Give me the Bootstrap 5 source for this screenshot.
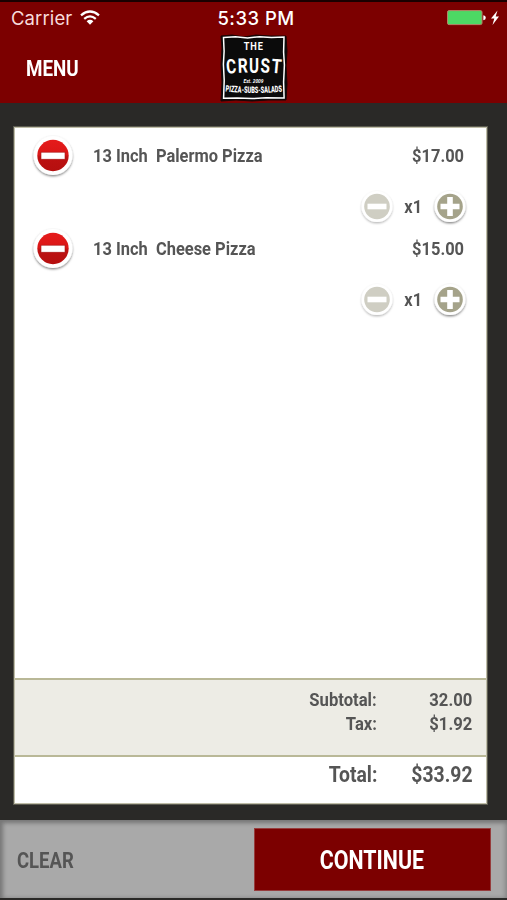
<!DOCTYPE html>
<html lang="en">
<head>
<meta charset="utf-8">
<meta name="viewport" content="width=device-width, initial-scale=1">
<title>The Crust - Order</title>
<link href="https://cdn.jsdelivr.net/npm/bootstrap@5.3.0/dist/css/bootstrap.min.css" rel="stylesheet">
<style>
body{background:#2a2927;font-family:Roboto,"Liberation Sans",sans-serif;color:#555;height:900px;overflow:hidden}
svg{display:block;flex:none}
.top-bar{background:#7c0000;border-top:2px solid #1a0000;height:103px}
.status{font-family:Inter,"Liberation Sans",sans-serif;font-size:18.5px;line-height:32px;height:32px;color:#f8dddd}
.status .clock{color:#fff;font-weight:500;letter-spacing:.45px;padding-left:5px}
.carrier{padding-left:3px;letter-spacing:.1px}
.cond{display:inline-block;font-weight:700;white-space:pre;transform:scaleX(.88);transform-origin:left center}
.cond.end{transform-origin:right center}
.cond.mid{transform-origin:center}
.cond.tight{transform:scaleX(.855)}
.menu-link{font-size:22px;line-height:30px;color:#fff;text-decoration:none;padding-left:26px;padding-top:20px}
.ticket{margin:23px 19px 0 13px;height:679px;background:#fff;border:1px solid #5d5c51;box-shadow:inset 0 0 0 1px #bfbda8;padding:1px}
.line-item{height:93px;font-size:18.7px}
.line-main{height:56px;padding:0 22px 0 15px}
.line-qty{height:46px;padding-right:17px}
.line-name{margin-left:17px}
.qty{padding:0 8px 0 7px}
.icon-btn{border:0;background:none;padding:0}
.sums{background:#edece5;border-top:2px solid #b9b897;border-bottom:2px solid #b9b897;height:79px;padding:8px 14px 0 0;font-size:18.7px;line-height:24px}
.sums .cond{transform:scaleX(.89)}
.grand{height:46px;padding:4px 14px 0 0;font-size:22px;line-height:28px}
.amount{width:95px}
.bottom-bar{margin-top:15px;height:78px;background:#a9a9a9;box-shadow:inset 3px 3px 4px #777,inset -2px 0 4px #888;padding:8px 16px 7px 17px}
.clear-link{font-size:22px;color:#555;text-decoration:none;margin-top:1px}
.clear-link .cond.tight{transform:scaleX(.84)}
.go{width:237px;background:#7c0000;color:#fff;border-radius:0;font-size:25px;padding:2px 2px 0 0;border:1px solid #963c3c}
</style>
<script src="https://cdn.jsdelivr.net/npm/bootstrap@5.3.0/dist/js/bootstrap.bundle.min.js"></script>
</head>
<body class="d-flex flex-column">
<svg width="0" height="0" class="position-absolute">
  <defs>
    <linearGradient id="red" x2="0" y2="1"><stop stop-color="#e51b1b"/><stop offset=".48" stop-color="#da1717"/><stop offset=".54" stop-color="#bd1111"/><stop offset="1" stop-color="#b50f0f"/></linearGradient>
    <filter id="drop" x="-20%" y="-20%" width="140%" height="140%"><feDropShadow dx="0" dy="1.3" stdDeviation="1" flood-color="#000" flood-opacity=".5"/></filter>
    <symbol id="remove" viewBox="0 0 46 46"><circle cx="23" cy="22.5" r="19.5" fill="#fff" filter="url(#drop)"/><circle cx="23" cy="22.5" r="15.7" fill="url(#red)"/><rect x="11" y="19.2" width="24" height="7" fill="#fff" stroke="#a51414" stroke-width=".6"/></symbol>
    <symbol id="minus" viewBox="0 0 38 38"><g opacity=".58"><circle cx="19" cy="18.5" r="15.5" fill="#fff" filter="url(#drop)"/></g><circle cx="19" cy="18.5" r="12.8" fill="#cfcec3"/><rect x="9.5" y="15.7" width="19" height="5.6" fill="#fff"/></symbol>
    <symbol id="plus" viewBox="0 0 38 38"><circle cx="19" cy="18.5" r="15.5" fill="#fff" filter="url(#drop)"/><circle cx="19" cy="18.5" r="12.8" fill="#a5a38a"/><path d="M16.2 9h5.6v6.7h6.7v5.6h-6.7v6.7h-5.6v-6.7H9.5v-5.6h6.7z" fill="#fff"/></symbol>
  </defs>
</svg>
<header class="top-bar flex-shrink-0">
  <div class="row g-0 status">
    <div class="col d-flex align-items-center ps-2"><span class="carrier">Carrier</span>
      <svg class="ms-2" width="20" height="17" viewBox="0 0 20 17" fill="none" stroke="#fff" stroke-width="2.3"><path d="M1 5.3Q10-2.3 19 5.3M4.2 8.8Q10 3.9 15.8 8.8"/><path d="M6.6 11.2Q10 8.5 13.4 11.2L10 14.8z" fill="#fff" stroke="none"/></svg>
    </div>
    <div class="col-auto clock">5:33 PM</div>
    <div class="col d-flex align-items-center justify-content-end pe-2">
      <svg width="53" height="18" viewBox="0 0 53 18"><rect x="1.5" y="1.6" width="34.5" height="14" rx="1.5" fill="#4cd964" stroke="#b58468"/><path d="M37.3 6.3q2.5.4 2.5 2.5t-2.5 2.5z" fill="#fff"/><path d="M51.5 1.5l-6.5 8h3.3l-1.8 6.5 6.500-8.500h-3.300z" fill="#fff"/></svg>
    </div>
  </div>
  <div class="row g-0">
    <div class="col d-flex align-items-start"><a href="#" class="menu-link"><span class="cond tight">MENU</span></a></div>
    <div class="col-auto">
      <svg width="68" height="68" viewBox="0 0 68 68" font-family="Roboto, sans-serif" fill="#fff" text-anchor="middle">
        <path d="M1 2L12 1l12 2 12-2 14 1 16 0 1 15-1 15 1 18-1 16-18 0-16 1-16-1-15 1 1-19-1-18 1-16z" fill="#0b0b0b" stroke="#1b0505"/>
        <path d="M3.500 3.500l12-.8 12 1.200 12-1.200 12 .9 12.500-.5-.4 15 .8 13-.8 17 .5 16-18-.3-14 .8-15-.7-13.500.4.600-18-.8-16 .7-13z" fill="none" stroke="#fff" stroke-width="1.500"/>
        <text x="33.800" y="15.700" font-size="11.500" font-weight="700" letter-spacing="1.200" transform="translate(33.800 0) scale(.8 1) translate(-33.800 0)">THE</text>
        <g font-size="20" font-weight="700">
          <text x="11.500" y="39.300" transform="rotate(-5 12 36)" textLength="10" lengthAdjust="spacingAndGlyphs">C</text>
          <text x="22.800" y="38.700" transform="rotate(-2 23 36)" textLength="10" lengthAdjust="spacingAndGlyphs">R</text>
          <text x="34" y="38.500" textLength="10" lengthAdjust="spacingAndGlyphs">U</text>
          <text x="45" y="38.700" transform="rotate(2 45 36)" textLength="9.500" lengthAdjust="spacingAndGlyphs">S</text>
          <text x="56.300" y="39.300" transform="rotate(5 56 36)" textLength="10" lengthAdjust="spacingAndGlyphs">T</text>
        </g>
        <text x="33.500" y="48.600" font-size="5" font-weight="700" font-style="italic" textLength="20" lengthAdjust="spacingAndGlyphs">Est. 2009</text>
        <path id="arc" d="M4.500 57.500Q34 60.500 63 57.500" fill="none"/>
        <text font-size="9" font-weight="900"><textPath href="#arc" startOffset="50%" textLength="57" lengthAdjust="spacingAndGlyphs">PIZZA-SUBS-SALADS</textPath></text>
      </svg>
    </div>
    <div class="col"></div>
  </div>
</header>
<main class="ticket d-flex flex-column flex-shrink-0">
  <section class="flex-grow-1">
    <div class="line-item">
      <div class="line-main d-flex align-items-center"><button class="icon-btn" aria-label="Remove"><svg width="46" height="46"><use href="#remove"/></svg></button><span class="cond line-name">13 Inch  Palermo Pizza</span><span class="cond end ms-auto">$17.00</span></div>
      <div class="line-qty d-flex align-items-center justify-content-end"><button class="icon-btn" aria-label="Less"><svg width="38" height="38"><use href="#minus"/></svg></button><span class="cond mid qty">x1</span><button class="icon-btn" aria-label="More"><svg width="38" height="38"><use href="#plus"/></svg></button></div>
    </div>
    <div class="line-item">
      <div class="line-main d-flex align-items-center"><button class="icon-btn" aria-label="Remove"><svg width="46" height="46"><use href="#remove"/></svg></button><span class="cond line-name">13 Inch  Cheese Pizza</span><span class="cond end ms-auto">$15.00</span></div>
      <div class="line-qty d-flex align-items-center justify-content-end"><button class="icon-btn" aria-label="Less"><svg width="38" height="38"><use href="#minus"/></svg></button><span class="cond mid qty">x1</span><button class="icon-btn" aria-label="More"><svg width="38" height="38"><use href="#plus"/></svg></button></div>
    </div>
  </section>
  <section class="sums">
    <div class="d-flex justify-content-end"><span class="cond end">Subtotal:</span><span class="amount text-end"><span class="cond end">32.00</span></span></div>
    <div class="d-flex justify-content-end"><span class="cond end">Tax:</span><span class="amount text-end"><span class="cond end">$1.92</span></span></div>
  </section>
  <section class="grand d-flex justify-content-end"><span class="cond end">Total:</span><span class="amount text-end"><span class="cond end">$33.92</span></span></section>
</main>
<footer class="bottom-bar d-flex justify-content-between align-items-stretch flex-shrink-0">
  <a href="#" class="clear-link align-self-center"><span class="cond tight">CLEAR</span></a>
  <button class="btn go"><span class="cond mid tight">CONTINUE</span></button>
</footer>
</body>
</html>
